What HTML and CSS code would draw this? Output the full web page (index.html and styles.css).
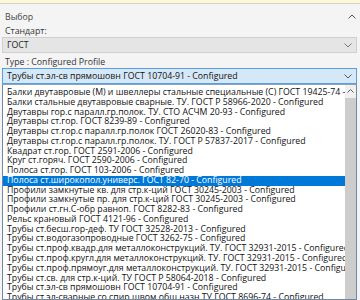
FILE: index.html
```html
<!DOCTYPE html>
<html lang="ru">
<head>
    <meta charset="UTF-8" />
    <title>Выбор профиля</title>
    <link rel="stylesheet" href="styles.css">
</head>
<body>
<div class="hint"></div>

<div class="group">
    <div class="group-head">
        <span>Выбор</span>
        <svg class="caret" width="8" height="5" viewBox="0 0 8 5"><path d="M0.5 4.5 L4 1 L7.5 4.5" fill="none" stroke="#555" stroke-width="1"/></svg>
    </div>

    <div class="field-label">Стандарт:</div>
    <div class="combo combo-gray">
        <span>ГОСТ</span>
        <svg class="chev" width="8" height="5" viewBox="0 0 8 5"><path d="M0.5 0.5 L4 4 L7.5 0.5" fill="none" stroke="#777" stroke-width="1"/></svg>
    </div>

    <div class="field-label type-label">Type : Configured Profile</div>
    <div class="combo combo-open">
        <span>Трубы ст.эл-св прямошовн ГОСТ 10704-91 - Configured</span>
        <svg class="chev" width="8" height="5" viewBox="0 0 8 5"><path d="M0.5 0.5 L4 4 L7.5 0.5" fill="none" stroke="#555" stroke-width="1"/></svg>
    </div>

    <div class="dropdown">
        <ul class="items">
            <li>Балки двутавровые (М) и швеллеры стальные специальные (С) ГОСТ 19425-74 - Configured</li>
            <li>Балки стальные двутавровые сварные. ТУ. ГОСТ Р 58966-2020 - Configured</li>
            <li>Двутавры гор.с паралл.гр.полок. ТУ. СТО АСЧМ 20-93 - Configured</li>
            <li>Двутавры ст.гор. ГОСТ 8239-89 - Configured</li>
            <li>Двутавры ст.гор.с паралл.гр.полок ГОСТ 26020-83 - Configured</li>
            <li>Двутавры ст.гор.с паралл.гр.полок. ТУ. ГОСТ Р 57837-2017 - Configured</li>
            <li>Квадрат ст.гор. ГОСТ 2591-2006 - Configured</li>
            <li>Круг ст.горяч. ГОСТ 2590-2006 - Configured</li>
            <li>Полоса ст.гор. ГОСТ 103-2006 - Configured</li>
            <li class="selected">Полоса ст.широкопол.универс. ГОСТ 82-70 - Configured</li>
            <li>Профили замкнутые кв. для стр.к-ций ГОСТ 30245-2003 - Configured</li>
            <li>Профили замкнутые пр. для стр.к-ций ГОСТ 30245-2003 - Configured</li>
            <li>Профили ст.гн.С-обр равноп. ГОСТ 8282-83 - Configured</li>
            <li>Рельс крановый ГОСТ 4121-96 - Configured</li>
            <li>Трубы ст.бесш.гор-деф. ТУ ГОСТ 32528-2013 - Configured</li>
            <li>Трубы ст.водогазопроводные ГОСТ 3262-75 - Configured</li>
            <li>Трубы ст.проф.квадр.для металлоконструкций. ТУ. ГОСТ 32931-2015 - Configured</li>
            <li>Трубы ст.проф.кругл.для металлоконструкций. ТУ. ГОСТ 32931-2015 - Configured</li>
            <li>Трубы ст.проф.прямоуг.для металлоконструкций. ТУ. ГОСТ 32931-2015 - Configured</li>
            <li>Трубы ст.св. для стр.к-ций. ТУ ГОСТ Р 58064-2018 - Configured</li>
            <li>Трубы ст.эл-св прямошовн ГОСТ 10704-91 - Configured</li>
            <li>Трубы ст.эл-сварные со спир.швом общ.назн ТУ ГОСТ 8696-74 - Configured</li>
        </ul>
        <div class="scrollbar">
            <div class="scroll-arrow">
                <svg width="7" height="4" viewBox="0 0 7 4"><path d="M0.5 3.5 L3.5 0.5 L6.5 3.5" fill="none" stroke="#606060" stroke-width="1"/></svg>
            </div>
            <div class="scroll-thumb"></div>
        </div>
    </div>
</div>
</body>
</html>
```

FILE: styles.css
```css
html {
    overflow: hidden;
}

body {
    margin: 0;
    font-family: 'Open Sans', 'Noto Sans', sans-serif;
    font-size: 8.75px;
    background-color: #f4f4f4;
    color: #222;
    overflow: hidden;
    height: 300px;
}

.hint {
    height: 3px;
    background-color: #fcf9d9;
    border-bottom: 1px solid #d2d2d2;
}

.group {
    padding: 0 3px 0 2px;
}

.group-head {
    display: flex;
    justify-content: space-between;
    align-items: center;
    height: 15px;
    margin-top: 5px;
    padding: 0 1px 0 3px;
    color: #444;
}

.caret {
    display: block;
}

.field-label {
    height: 11px;
    line-height: 11px;
    margin-top: 2px;
    padding-left: 3px;
    color: #333;
}

.type-label {
    margin-top: 4px;
}

.combo {
    display: flex;
    justify-content: space-between;
    align-items: center;
    box-sizing: border-box;
    height: 16px;
    padding: 0 4px 0 4px;
    border: 1px solid #cfcfcf;
}

.combo-gray {
    background-color: #e5e5e5;
}

.combo-open {
    background-color: #d5e8f8;
    border-color: #5a9fdd;
    color: #111;
}

.chev {
    display: block;
}

.dropdown {
    display: flex;
    border: 1px solid #6e8aa6;
    border-top-color: #8aa4bd;
    background-color: #fff;
    height: 214px;
}

.items {
    flex: 1;
    min-width: 0;
    list-style: none;
    margin: 0;
    padding: 3px 0 0 0;
    overflow: hidden;
}

.items li {
    height: 9.77px;
    line-height: 9.77px;
    padding-left: 4px;
    white-space: nowrap;
    overflow: hidden;
    color: #111;
}

.items li.selected {
    background-color: #0078d7;
    color: #fff;
}

.scrollbar {
    width: 11px;
    display: flex;
    flex-direction: column;
    background-color: #f0f0f0;
}

.scroll-arrow {
    height: 12px;
    display: flex;
    align-items: center;
    justify-content: center;
}

.scroll-thumb {
    flex: 1;
    background-color: #cdcdcd;
    margin-top: 1px;
}
```
